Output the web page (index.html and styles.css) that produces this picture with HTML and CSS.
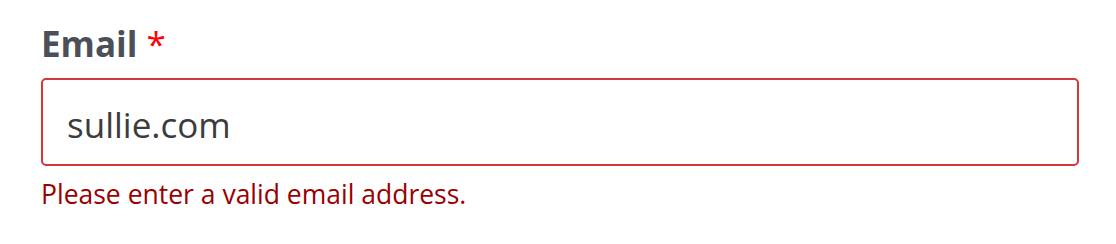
FILE: index.html
```html
<!DOCTYPE html>
<html>
<head>
<meta charset="utf-8">
<link rel="stylesheet" href="styles.css">
</head>
<body>
<div class="field">
  <label class="label" for="email">Email <span class="req">*</span></label>
  <div class="input">sullie.com</div>
  <div class="error">Please enter a valid email address.</div>
</div>
</body>
</html>
```

FILE: styles.css
```css
html, body {
  margin: 0;
  padding: 0;
  background: #ffffff;
}
body {
  font-family: "Open Sans", "Noto Sans", sans-serif;
}
.field {
  padding: 20px 37px 0 41px;
  display: flex;
  flex-direction: column;
}
.label {
  font-size: 35px;
  font-weight: 700;
  color: #4b4f58;
  line-height: 48px;
  margin-bottom: 10px;
}
.req {
  color: #ff0000;
  font-weight: 400;
}
.input {
  height: 80px;
  padding: 4px 24px 0 24px;
  border: 2px solid #d63638;
  border-radius: 5px;
  font-size: 35px;
  color: #3c3c3c;
  display: flex;
  align-items: center;
}
.error {
  font-size: 26.5px;
  color: #990000;
  line-height: 36px;
  margin-top: 10px;
}
```
